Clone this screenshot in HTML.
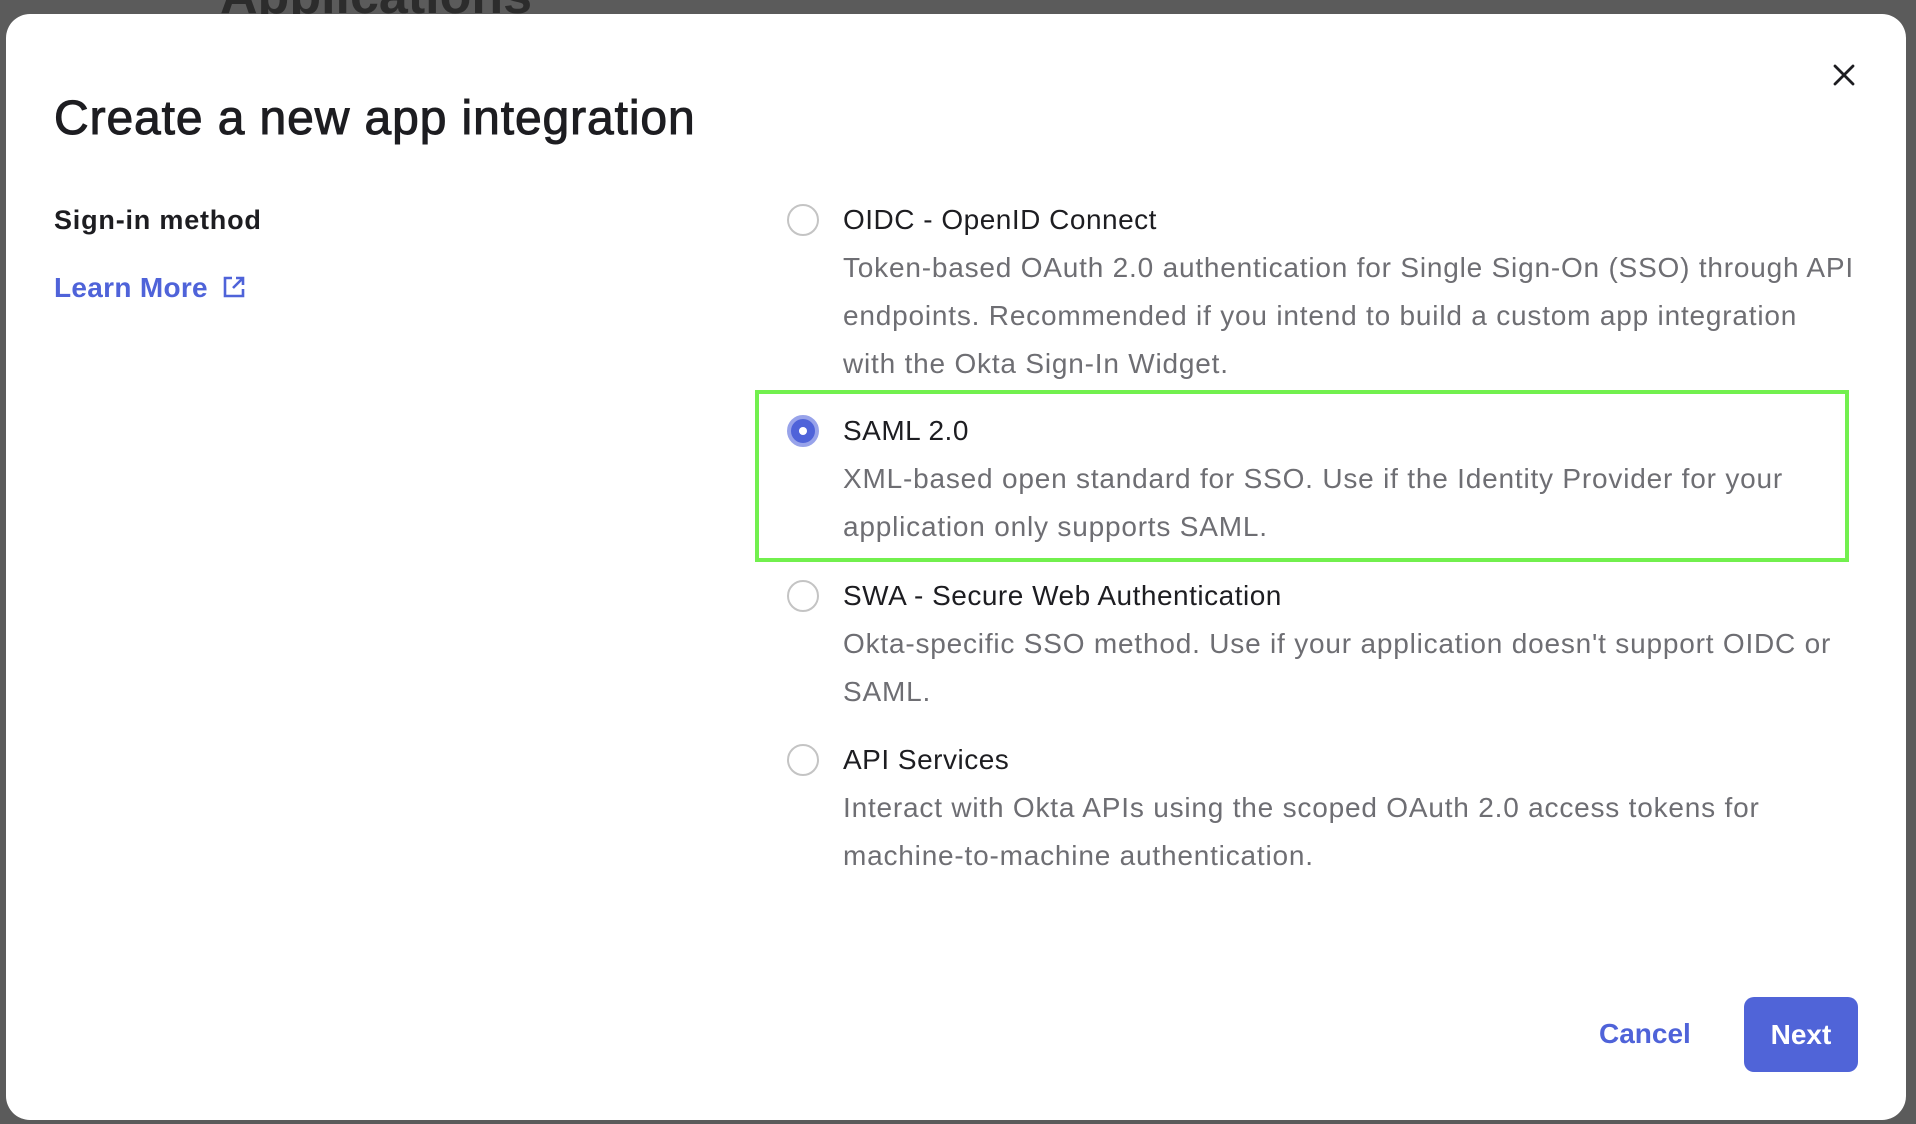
<!DOCTYPE html>
<html><head><meta charset="utf-8"><style>
*{margin:0;padding:0;box-sizing:border-box}
body{width:1916px;height:1124px;background:#5b5b5b;position:relative;overflow:hidden;font-family:"Liberation Sans",sans-serif}
.bg{position:absolute;left:220px;top:-34px;font-size:52px;font-weight:bold;color:#2c2c2c}
.modal{position:absolute;left:6px;top:14px;width:1900px;height:1106px;background:#fff;border-radius:24px}
.t{position:absolute;white-space:nowrap}
h1{position:absolute;left:48px;top:77px;font-size:48px;font-weight:normal;color:#1d1d21;letter-spacing:0.9px;-webkit-text-stroke:1px #1d1d21}
.lab{left:48px;top:191px;font-size:27px;font-weight:bold;color:#1d1d21;letter-spacing:0.8px}
.lm{left:48px;top:258px;font-size:28px;font-weight:bold;color:#4f63d9;letter-spacing:0.3px}
.radio{position:absolute;left:781px;width:32px;height:32px;border-radius:50%;border:2px solid #c4c4c4;background:#fff}
.radio.on{background:#4f63d9;border:4px solid #98a3ea}
.radio.on::after{content:"";position:absolute;left:8px;top:8px;width:8px;height:8px;border-radius:50%;background:#fff}
.ot{left:837px;font-size:28px;color:#1d1d21;letter-spacing:0.5px}
.od{left:837px;font-size:28px;color:#6e6e73;line-height:48px;letter-spacing:0.8px}
.green{position:absolute;left:749px;top:376px;width:1094px;height:172px;border:4px solid #72f04e}
.cancel{left:1593px;top:1004px;font-size:28px;font-weight:bold;color:#4f63d9}
.next{position:absolute;left:1738px;top:983px;width:114px;height:75px;background:#5064d8;border-radius:10px;color:#fff;font-size:28px;font-weight:bold;text-align:center;line-height:75px}
</style></head><body>
<div class="bg">Applications</div>
<div class="modal">
<h1>Create a new app integration</h1>
<svg style="position:absolute;left:1827px;top:50px" width="22" height="22" viewBox="0 0 22 22"><path d="M2 2L20 20M20 2L2 20" stroke="#1d1d21" stroke-width="2.8" stroke-linecap="round"/></svg>
<div class="t lab">Sign-in method</div>
<div class="t lm">Learn More <svg style="vertical-align:-2px;margin-left:6px" width="24" height="24" viewBox="0 0 24 24"><path d="M10 3H3v18h18v-7M14 3h7v7M21 3L11 13" fill="none" stroke="#4f63d9" stroke-width="2.6"/></svg></div>

<div class="radio" style="top:190px"></div>
<div class="t ot" style="top:190px">OIDC - OpenID Connect</div>
<div class="t od" style="top:230px">Token-based OAuth 2.0 authentication for Single Sign-On (SSO) through API<br>endpoints. Recommended if you intend to build a custom app integration<br>with the Okta Sign-In Widget.</div>

<div class="green"></div>
<div class="radio on" style="top:401px"></div>
<div class="t ot" style="top:401px">SAML 2.0</div>
<div class="t od" style="top:441px">XML-based open standard for SSO. Use if the Identity Provider for your<br>application only supports SAML.</div>

<div class="radio" style="top:566px"></div>
<div class="t ot" style="top:566px">SWA - Secure Web Authentication</div>
<div class="t od" style="top:606px">Okta-specific SSO method. Use if your application doesn't support OIDC or<br>SAML.</div>

<div class="radio" style="top:730px"></div>
<div class="t ot" style="top:730px">API Services</div>
<div class="t od" style="top:770px">Interact with Okta APIs using the scoped OAuth 2.0 access tokens for<br>machine-to-machine authentication.</div>

<div class="t cancel">Cancel</div>
<div class="next">Next</div>
</div>
</body></html>
